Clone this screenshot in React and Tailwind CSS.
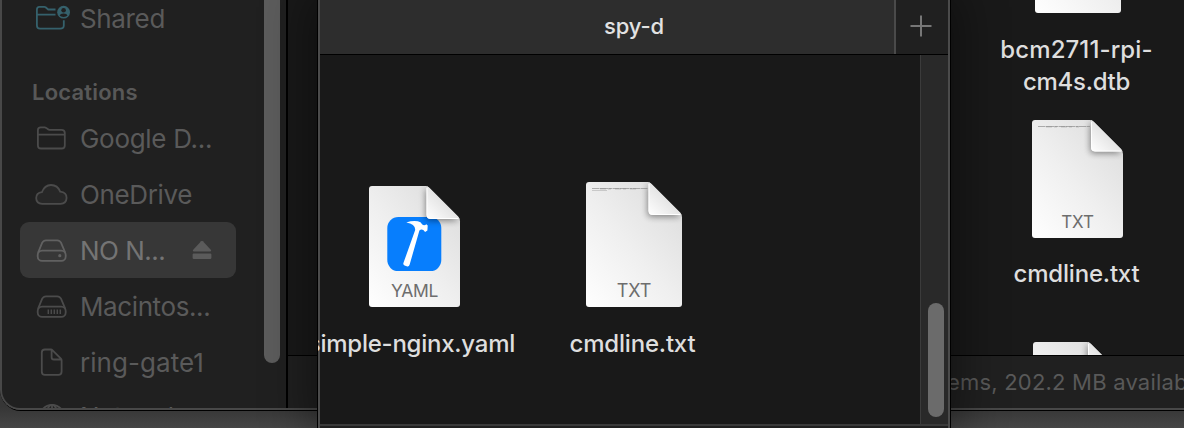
import React from "react";

function Folder({ shared = false }) {
  return shared ? (
    <svg width="36" height="28" viewBox="0 0 36 28" fill="none" stroke="#35616c" strokeWidth="1.8" strokeLinejoin="round">
      <path d="M20.5 5.5H13.2L10.6 3.3Q10.1 2.9 9.3 2.9H4.3Q1.9 2.9 1.9 5.4V21.5Q1.9 24.6 5 24.6H25.2Q28.8 24.6 28.8 21.5V16.3M1.9 10.7H20.5" />
      <circle cx="28.6" cy="8.2" r="6.4" fill="#35616c" stroke="none" />
      <circle cx="28.6" cy="6.2" r="2.3" fill="#202020" stroke="none" />
      <path d="M24.7 11.5Q25.3 9.4 28.6 9.4T32.5 11.5Q31.3 12.9 28.6 12.9T24.7 11.5Z" fill="#202020" stroke="none" />
    </svg>
  ) : (
    <svg width="36" height="28" viewBox="0 0 36 28" fill="none" stroke="#4b4b4b" strokeWidth="1.8" strokeLinejoin="round">
      <path d="M2.9 6Q2.9 3.4 5.8 3.4H9.7Q10.5 3.4 11.2 3.9L13 5.3Q13.6 5.8 14.6 5.8H26.4Q29.8 5.8 29.8 9V21.4Q29.8 24.5 26.6 24.5H6Q2.9 24.5 2.9 21.4ZM2.9 10.7H29.8" />
    </svg>
  );
}

function Cloud() {
  return (
    <svg width="36" height="28" viewBox="0 0 36 28">
      <path d="M7.2 23.9Q1.2 23.6 1.2 18.1Q1.3 12.8 6.9 12.2Q9.6 5 16 5Q22.6 5 25.2 11.6Q31.6 12.2 31.6 17.9Q31.3 23.6 25.6 23.9Z" fill="#272727" stroke="#4b4b4b" strokeWidth="1.8" />
    </svg>
  );
}

function Drive({ kind }) {
  return (
    <svg width="36" height="28" viewBox="0 0 36 28" fill="none" stroke={kind === "external" ? "#616161" : "#4b4b4b"} strokeWidth="1.8">
      <g transform="translate(.8 .6)">
        <path d="M2.2 16.2L6.4 6.1Q7.6 3.7 10.2 3.7H21.4Q24 3.7 25.2 6.1L29.5 16.2" />
        <rect x="1.9" y="14" width="28" height="10.2" rx="4.4" />
        {kind === "external" ? (
          <circle cx="24" cy="19.1" r="1.6" fill="#616161" stroke="none" />
        ) : (
          <path d="M12.5 17v4.4M15.5 17v4.4M18.5 17v4.4M21.5 17v4.4M24.5 17v4.4" strokeWidth="1.5" />
        )}
      </g>
    </svg>
  );
}

function Doc() {
  return (
    <svg width="36" height="28" viewBox="0 0 36 28" fill="none" stroke="#4b4b4b" strokeWidth="1.8" strokeLinejoin="round">
      <path transform="translate(.9 .3)" d="M9 1.2H15.1Q15.9 1.2 16.7 2L25 10.3Q25.7 11 25.7 12V23.2Q25.7 26.6 22.4 26.6H9Q5.9 26.6 5.9 23.2V4.3Q5.9 1.2 9 1.2ZM15.7 1.7V8.9Q15.7 11.2 18 11.2H25.3" />
    </svg>
  );
}

function Globe() {
  return (
    <svg width="36" height="28" viewBox="0 0 36 28" fill="none" stroke="#4b4b4b" strokeWidth="1.8">
      <circle cx="17" cy="15.4" r="12.5" />
      <ellipse cx="17" cy="15.4" rx="6" ry="12.5" />
      <path d="M17 3v25M5 15.4h24M7 8Q17 13 27 8" />
    </svg>
  );
}

function SideRow({ icon, label, tracking, selected }) {
  return (
    <div className={"flex h-14 w-[216px] shrink-0 items-center rounded-[9px] pl-[15px] " + (selected ? "bg-[#373737] text-[#747474]" : "text-[#5a5a5a]")}>
      <span className="w-[45px] shrink-0">{icon}</span>
      <span className={"pt-px text-[26px] leading-8 whitespace-nowrap " + tracking}>{label}</span>
      {selected && (
        <svg className="mr-[24px] ml-auto" width="20" height="20" viewBox="0 0 20 20" fill="#5b5b5b">
          <path d="M9.1 1.2Q10 .4 10.9 1.2L19 10Q19.8 11.4 18.2 11.4H1.8Q.2 11.4 1 10Z" />
          <rect x=".6" y="13.6" width="18.8" height="5.4" rx="1.2" />
        </svg>
      )}
    </div>
  );
}

function FileIcon({ id, w, h, fold, label, size, hammer, scribble }) {
  const fx = w - fold;
  const outline = `M3 0H${fx - 1}Q${fx + 1} 0 ${fx + 3} 2L${w - 2} ${fold - 3}Q${w} ${fold - 1} ${w} ${fold + 2}V${h - 3}Q${w} ${h} ${w - 3} ${h}H3Q0 ${h} 0 ${h - 3}V3Q0 0 3 0Z`;
  const flap = `M${fx} 0Q${fx + 1.5} .5 ${fx + 3} 2L${w - 2} ${fold - 3}Q${w - 1} ${fold - 2} ${w - 0.5} ${fold - 0.5}H${fx + 4}Q${fx} ${fold - 0.5} ${fx} ${fold - 4.5}Z`;
  return (
    <svg width={w} height={h} viewBox={`0 0 ${w} ${h}`} className="block shrink-0 overflow-visible">
      <defs>
        <linearGradient id={id + "p"} x1="0.1" y1="1" x2="0.9" y2="0.1">
          <stop offset="0" stopColor="#fdfdfd" />
          <stop offset="0.5" stopColor="#efefef" />
          <stop offset="1" stopColor="#dedede" />
        </linearGradient>
        <linearGradient id={id + "f"} x1="0" y1="1" x2="0.55" y2="0.45">
          <stop offset="0" stopColor="#ffffff" />
          <stop offset="1" stopColor="#e3e3e3" />
        </linearGradient>
        <clipPath id={id + "c"}>
          <path d={outline} />
        </clipPath>
        <filter id={id + "b"} x="-50%" y="-50%" width="200%" height="200%">
          <feGaussianBlur stdDeviation="3" />
        </filter>
      </defs>
      <path d={outline} fill={`url(#${id}p)`} />
      {hammer && (
        <g transform="translate(-.4 -.4)">
          <rect x="18.7" y="31.5" width="54" height="54" rx="11" fill="#077efd" />
          <path d="M37.7 36.8Q43.7 34.7 49.2 35.6Q52.3 36.1 53.7 38.9Q55.5 40.5 57.8 38.7L59.1 40L58.8 45L56.5 46.3Q53.7 42.6 50.8 44.8L41 79.2Q40.3 81.3 38.1 80.6L36 79.9Q34.2 79.1 34.9 77.2L46.5 44.7Q47.3 38.4 37.7 36.8Z" fill="#fff" />
        </g>
      )}
      <g clipPath={`url(#${id}c)`}>
        <path d={flap} transform="translate(-1 2)" fill="#000" opacity="0.42" filter={`url(#${id}b)`} />
      </g>
      <path d={flap} fill={`url(#${id}f)`} />
      <path d={`M${fx + 0.5} 2V${fold - 4.5}Q${fx + 0.5} ${fold - 1} ${fx + 4} ${fold - 1}H${w - 2}`} fill="none" stroke="#fff" />
      {scribble && (
        <g stroke="#777" strokeWidth="1" fill="none">
          <path d={`M6 6.5H${fx - 1}`} strokeDasharray="7 .5 9 .5 3 .5" opacity="0.55" />
          <path d={`M14 6.9H${fx - 12}`} strokeDasharray="6 2 3 4" opacity="0.4" />
          {scribble > 1 && <path d="M6 8.5H21" opacity="0.3" />}
        </g>
      )}
      {label && (
        <text x={w / 2} y={h - 9.7} textAnchor="middle" fontSize={size} fontWeight="400" fill="#6d6d6d" letterSpacing={label === "YAML" ? "-0.3" : "-0.1"} fontFamily="Inter, sans-serif">
          {label}
        </text>
      )}
    </svg>
  );
}

function BackWindow() {
  return (
    <div className="absolute -top-10 left-0 h-[451px] w-[1240px] overflow-hidden rounded-bl-[21px] border-b border-black">
      <div className="flex h-full overflow-hidden rounded-bl-[20px] border-b-2 border-l-2 border-[#484848] bg-[#202020]">
        <aside className="flex w-[284px] shrink-0 overflow-hidden pt-[30px] pl-[18px]">
          <div className="flex w-[244px] shrink-0 flex-col">
            <SideRow icon={<Folder shared />} label="Shared" tracking="tracking-[-0.35px]" />
            <div className="flex h-[64px] shrink-0 items-end pb-[2px] pl-3 text-[22px] leading-8 font-semibold tracking-[0.2px] text-[#585858]">Locations</div>
            <SideRow icon={<Folder />} label="Google D..." tracking="tracking-[-0.3px]" />
            <SideRow icon={<Cloud />} label="OneDrive" tracking="tracking-[-0.35px]" />
            <SideRow icon={<Drive kind="external" />} label="NO N..." tracking="tracking-[-0.5px]" selected />
            <SideRow icon={<Drive />} label="Macintos..." tracking="tracking-[-0.4px]" />
            <SideRow icon={<Doc />} label="ring-gate1" tracking="tracking-[0.05px]" />
            <div className="-mt-[2px] shrink-0">
              <SideRow icon={<Globe />} label="Network" tracking="tracking-[-0.4px]" />
            </div>
          </div>
          <div className="-mt-[30px] h-[403px] w-4 shrink-0 rounded-full bg-[#5c5c5c]" />
        </aside>
        <div className="w-[2px] shrink-0 bg-black" />
        <main className="flex min-w-0 flex-1 flex-col">
          <section className="flex h-[395px] flex-col overflow-hidden bg-[#191919] pl-[660px]">
            <div className="flex w-[255px] flex-col items-center text-[24px] leading-8 font-medium text-[#dedede]">
              <div className="h-[53px] pl-[4px]">
                <div className="-mt-[65px]">
                  <FileIcon id="dtb" w={86} h={118} fold={31} />
                </div>
              </div>
              <div className="mt-[21px] pl-[2px] text-center whitespace-nowrap">
                <div className="tracking-[0.1px]">bcm2711-rpi-</div>
                <div className="tracking-[-0.3px]">cm4s.dtb</div>
              </div>
              <div className="mt-[22px] pl-[3px]">
                <FileIcon id="cmdb" w={91} h={118} fold={32} label="TXT" size={17} scribble={1} />
              </div>
              <div className="mt-5 pl-[2px] tracking-[-0.2px]">cmdline.txt</div>
              <div className="mt-[52px]">
                <FileIcon id="part" w={86} h={118} fold={31} />
              </div>
            </div>
          </section>
          <footer className="flex flex-1 items-center border-t border-black pl-[629px] text-[22px] tracking-[0.2px] whitespace-nowrap text-[#595959]">
            <span className="flex w-[30px] shrink-0 justify-end">it</span>
            <span>ems, 202.2 MB available</span>
          </footer>
        </main>
      </div>
    </div>
  );
}

function FrontWindow() {
  return (
    <div className="absolute top-0 left-[317px] flex h-[428px] w-[634px] flex-col border-x border-black bg-[#191919] shadow-[0_0_44px_8px_rgba(0,0,0,0.42)]">
      <div className="flex h-full flex-col border-x-2 border-[#4b4b4b]">
        <header className="flex h-[55px] shrink-0 border-b border-black bg-[#202020]">
          <div className="flex w-[576px] items-center justify-center border-r-2 border-[#4a4a4a] bg-[#2d2d2d] pb-px pl-[54px] text-[22px] font-medium tracking-[-0.1px] text-[#e2e2e2]">spy-d</div>
          <div className="flex flex-1 items-center justify-center pr-[2px] pb-[2px]">
            <svg width="22" height="22" viewBox="0 0 22 22" stroke="#777" strokeWidth="2">
              <path d="M11 .5v21M.5 11h21" />
            </svg>
          </div>
        </header>
        <div className="flex h-[369px] shrink-0">
          <section className="relative -ml-[2px] flex w-[602px] shrink-0 items-start overflow-hidden pl-[2px] text-[24px] leading-8 font-medium whitespace-nowrap text-[#dedede]">
            <div className="flex w-[195px] shrink-0 flex-col items-end pt-[131px]">
              <div className="mr-[55.5px]">
                <FileIcon id="yaml" w={91} h={121} fold={33.5} label="YAML" size={17.5} hammer />
              </div>
              <div className="mt-[21px] tracking-[-0.25px]">simple-nginx.yaml</div>
            </div>
            <div className="flex w-[238px] shrink-0 flex-col items-center pt-[127px]">
              <FileIcon id="cmdf" w={96} h={125} fold={33.5} label="TXT" size={18} scribble={2} />
              <div className="mt-[21px] pr-[3px] tracking-[-0.2px]">cmdline.txt</div>
            </div>
          </section>
          <div className="flex flex-1 items-end border-l border-[#3b3b3b] bg-[#292929] pb-[7px] pl-[7px]">
            <div className="h-[114px] w-4 rounded-full bg-[#6b6b6b]" />
          </div>
        </div>
        <div className="h-1 border-t-2 border-[#3a3a3a] bg-[#202020]" />
      </div>
    </div>
  );
}

export default function App() {
  return (
    <div className="relative h-[428px] w-[1184px] overflow-hidden bg-linear-to-b from-[#363636] from-95% to-[#454545] font-['Inter',sans-serif]">
      <BackWindow />
      <FrontWindow />
    </div>
  );
}
